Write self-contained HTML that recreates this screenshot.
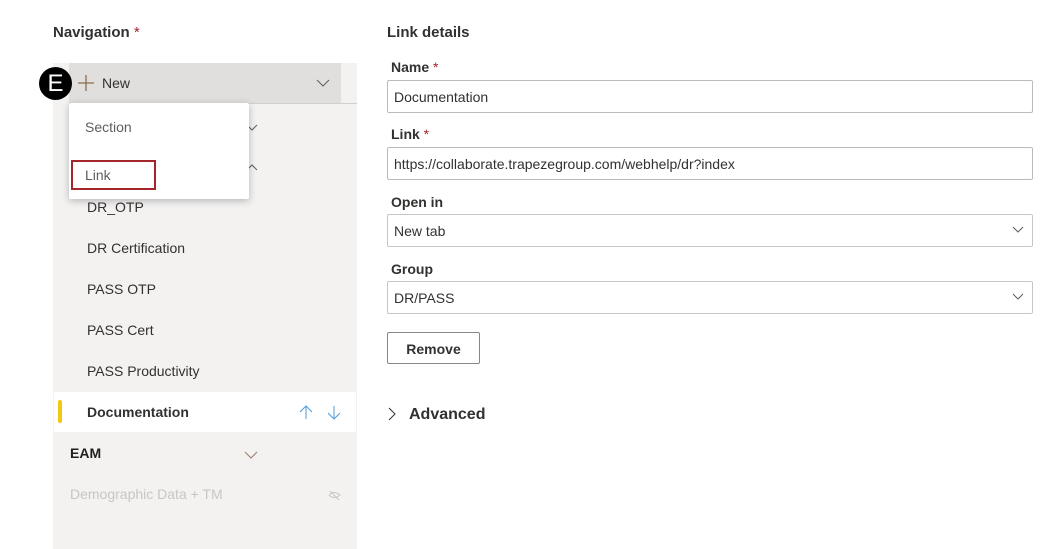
<!DOCTYPE html>
<html><head><style>
*{box-sizing:border-box;margin:0;padding:0}
body{width:1049px;height:549px;background:#fff;font-family:"Liberation Sans",sans-serif;color:#323130;position:relative;overflow:hidden}
.a{position:absolute}
.t{font-size:14px;white-space:nowrap}
.lab{font-size:14px;font-weight:bold;color:#323130}
.req{color:#a4262c;font-weight:normal}
.inp{position:absolute;left:387px;width:646px;height:33px;border:1px solid #c8c6c4;border-radius:2px;font-size:14px;padding:8px 0 0 6px;color:#323130}
.chev{position:absolute;right:8px;top:11px}
</style></head><body>
<div class="a" style="left:53px;top:24px;font-size:15px;font-weight:bold">Navigation <span class="req">*</span></div>
<div class="a" style="left:53px;top:63px;width:304px;height:486px;background:#f3f2f1"></div>
<div class="a" style="left:69px;top:63px;width:272px;height:40px;background:#e1dfdd"></div>
<div class="a" style="left:69px;top:103px;width:288px;height:1px;background:#d2d0ce"></div>
<svg class="a" style="left:77px;top:74px" width="18" height="18"><path d="M9 1V17M1 9H17" stroke="#8a6d4e" stroke-width="1.3"/></svg>
<div class="a t" style="left:102px;top:75px">New</div>
<svg class="a" style="left:316px;top:79px" width="14" height="8"><path d="M1 1L7 7L13 1" stroke="#605e5c" fill="none"/></svg>
<div class="a" style="left:39px;top:67px;width:33px;height:33px;border-radius:50%;background:#000;color:#fff;font-size:24px;text-align:center;line-height:33px">E</div>
<svg class="a" style="left:246px;top:124px" width="12" height="8"><path d="M1 1L6 6L11 1" stroke="#605e5c" fill="none"/></svg>
<svg class="a" style="left:246px;top:163px" width="12" height="8"><path d="M1 7L6 2L11 7" stroke="#605e5c" fill="none"/></svg>
<div class="a" style="left:69px;top:103px;width:180px;height:96px;background:#fff;border-radius:2px;box-shadow:0 2px 8px rgba(0,0,0,.25)"></div>
<div class="a t" style="left:85px;top:119px;color:#605e5c">Section</div>
<div class="a" style="left:71px;top:160px;width:85px;height:30px;border:2px solid #a4262c"></div>
<div class="a t" style="left:85px;top:167px;color:#605e5c">Link</div>
<div class="a t" style="left:87px;top:199px">DR_OTP</div>
<div class="a t" style="left:87px;top:240px">DR Certification</div>
<div class="a t" style="left:87px;top:281px">PASS OTP</div>
<div class="a t" style="left:87px;top:322px">PASS Cert</div>
<div class="a t" style="left:87px;top:363px">PASS Productivity</div>
<div class="a" style="left:54px;top:392px;width:302px;height:40px;background:#fff"></div>
<div class="a" style="left:58px;top:400px;width:4px;height:23px;background:#f2c811;border-radius:2px"></div>
<div class="a t" style="left:87px;top:404px;font-weight:bold">Documentation</div>
<svg class="a" style="left:299px;top:405px" width="14" height="15"><path d="M7 14V1M1 7L7 1L13 7" stroke="#4f9bd9" fill="none"/></svg>
<svg class="a" style="left:327px;top:405px" width="14" height="15"><path d="M7 1V14M1 8L7 14L13 8" stroke="#4f9bd9" fill="none"/></svg>
<div class="a t" style="left:70px;top:445px;font-weight:bold;color:#201f1e">EAM</div>
<svg class="a" style="left:244px;top:451px" width="14" height="8"><path d="M1 1L7 7L13 1" stroke="#9a7a6a" fill="none"/></svg>
<div class="a t" style="left:70px;top:486px;color:#c8c6c4">Demographic Data + TM</div>
<svg class="a" style="left:328px;top:490px" width="13" height="11"><path d="M1 5Q6 0 12 5Q6 10 1 5M2 1L11 10" stroke="#c8c6c4" fill="none"/></svg>

<div class="a" style="left:387px;top:24px;font-size:15px;font-weight:bold">Link details</div>
<div class="a lab" style="left:391px;top:59px">Name <span class="req">*</span></div>
<div class="inp" style="top:80px;border-color:#bdbbb9">Documentation</div>
<div class="a lab" style="left:391px;top:126px">Link <span class="req">*</span></div>
<div class="inp" style="top:147px;border-color:#bdbbb9">https://collaborate.trapezegroup.com/webhelp/dr?index</div>
<div class="a lab" style="left:391px;top:194px">Open in</div>
<div class="inp" style="top:214px">New tab<svg class="chev" width="12" height="7"><path d="M1 1L6 6L11 1" stroke="#605e5c" fill="none"/></svg></div>
<div class="a lab" style="left:391px;top:261px">Group</div>
<div class="inp" style="top:281px">DR/PASS<svg class="chev" width="12" height="7"><path d="M1 1L6 6L11 1" stroke="#605e5c" fill="none"/></svg></div>
<div class="a" style="left:387px;top:332px;width:93px;height:32px;border:1px solid #8a8886;border-radius:2px;font-size:14px;font-weight:bold;text-align:center;line-height:32px">Remove</div>
<svg class="a" style="left:388px;top:407px" width="9" height="14"><path d="M1 1L7 7L1 13" stroke="#323130" fill="none"/></svg>
<div class="a" style="left:409px;top:406px;font-size:16px;font-weight:bold">Advanced</div>
</body></html>
